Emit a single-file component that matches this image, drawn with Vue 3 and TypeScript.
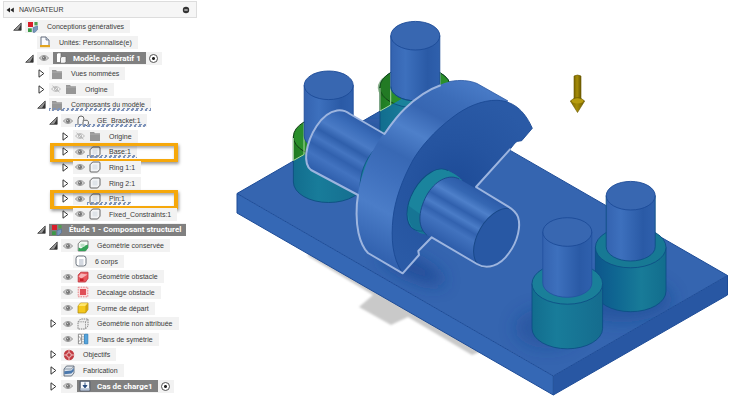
<script setup lang="ts">
import { ref } from 'vue'

interface TreeNode {
  label: string
  depth: number
  icon: string
  arrow?: 'open' | 'closed'
  eye?: 'on' | 'off'
  strong?: boolean
  full?: boolean
  hatch?: boolean
  boxed?: boolean
  radio?: boolean
}

const nodes = ref<TreeNode[]>([
  { label: 'Conceptions génératives', depth: 0, icon: 'study', arrow: 'open' },
  { label: 'Unités: Personnalisé(e)', depth: 1, icon: 'units' },
  { label: 'Modèle génératif 1', depth: 1, icon: 'model', arrow: 'open', eye: 'on', strong: true, radio: true },
  { label: 'Vues nommées', depth: 2, icon: 'folder', arrow: 'closed' },
  { label: 'Origine', depth: 2, icon: 'folder', arrow: 'closed', eye: 'off' },
  { label: 'Composants du modèle', depth: 2, icon: 'folder', arrow: 'open', hatch: true },
  { label: 'GE_Bracket:1', depth: 3, icon: 'bracket', arrow: 'open', eye: 'on', hatch: true },
  { label: 'Origine', depth: 4, icon: 'folder', arrow: 'closed', eye: 'off' },
  { label: 'Base:1', depth: 4, icon: 'body', arrow: 'closed', eye: 'on', hatch: true, boxed: true },
  { label: 'Ring 1:1', depth: 4, icon: 'body', arrow: 'closed', eye: 'on' },
  { label: 'Ring 2:1', depth: 4, icon: 'body', arrow: 'closed', eye: 'on' },
  { label: 'Pin:1', depth: 4, icon: 'body', arrow: 'closed', eye: 'on', hatch: true, boxed: true },
  { label: 'Fixed_Constraints:1', depth: 4, icon: 'body', arrow: 'closed', eye: 'on' },
  { label: 'Étude 1 - Composant structurel', depth: 2, icon: 'study', arrow: 'open', strong: true, full: true },
  { label: 'Géométrie conservée', depth: 3, icon: 'preserve', arrow: 'open', eye: 'on' },
  { label: '6 corps', depth: 4, icon: 'solid' },
  { label: 'Géométrie obstacle', depth: 3, icon: 'obstacle', eye: 'on' },
  { label: 'Décalage obstacle', depth: 3, icon: 'offset', eye: 'on' },
  { label: 'Forme de départ', depth: 3, icon: 'start', eye: 'on' },
  { label: 'Géométrie non attribuée', depth: 3, icon: 'unassigned', arrow: 'closed', eye: 'on' },
  { label: 'Plans de symétrie', depth: 3, icon: 'symmetry', eye: 'on' },
  { label: 'Objectifs', depth: 3, icon: 'goals', arrow: 'closed' },
  { label: 'Fabrication', depth: 3, icon: 'make', arrow: 'closed' },
  { label: 'Cas de charge1', depth: 3, icon: 'load', arrow: 'closed', eye: 'on', strong: true, radio: true },
])

function toggleEye(node: TreeNode) {
  node.eye = node.eye === 'on' ? 'off' : 'on'
}
</script>

<template>
  <div class="page">
    <svg class="defs" aria-hidden="true">
      <symbol id="open" viewBox="0 0 9 9">
        <path d="M.7 8.3 8.2 1V8.3Z" fill="#999" stroke="#333" stroke-width=".8" />
        <path d="M5 8 8 3V8Z" fill="#333" />
      </symbol>
      <symbol id="closed" viewBox="0 0 9 9">
        <path d="M2 .8 6.800 4.500 2 8.200Z" fill="#fff" stroke="#333" stroke-width="1" stroke-linejoin="round" />
      </symbol>
      <symbol id="on" viewBox="0 0 10 8">
        <path d="M.3 4Q5-1.2 9.7 4 5 9.2.3 4Z" fill="#d0d0d0" stroke="#8b8b8b" stroke-width=".8" />
        <circle cx="5" cy="4" r="2.1" fill="#777" />
        <circle cx="4.5" cy="3.5" r=".6" fill="#ddd" />
      </symbol>
      <symbol id="off" viewBox="0 0 10 8">
        <path d="M.5 4Q5-1 9.5 4 5 9 .5 4Z" fill="none" stroke="#b0b0b0" stroke-width=".8" />
        <circle cx="5" cy="4" r="1.6" fill="none" stroke="#b0b0b0" stroke-width=".8" />
        <path d="m1.5.8 7 6.4" stroke="#aaa" stroke-width=".8" />
      </symbol>
      <symbol id="folder" viewBox="0 0 12 12">
        <path d="M1 2h4l1 1.2h5V11H1Z" fill="#969696" />
        <path d="M1 4.1h10" stroke="#b9b9b9" stroke-width=".6" />
      </symbol>
      <symbol id="study" viewBox="0 0 12 12">
        <path d="M1 1h5v5H1Z" fill="#d91e2a" />
        <path d="M7.4 1H10.600v3.400H7.400Z" fill="#4f9f50" />
        <path d="M1 7.300h3.800V11H1Z" fill="#3c9a48" />
        <path d="M6 6.500 10.500 5v3.500L8 11.300H6Z" fill="#7898bd" stroke="#4d6d96" stroke-width=".6" />
      </symbol>
      <symbol id="units" viewBox="0 0 12 12">
        <path d="M2 1h5l3 3v6H2Z" fill="#fafbfd" stroke="#555e70" stroke-width=".9" />
        <path d="M7 1v3h3" fill="#ccd3df" stroke="#555e70" stroke-width=".7" />
        <path d="M1 9h10v2.200H1Z" fill="#e3a51f" />
      </symbol>
      <symbol id="model" viewBox="0 0 12 12">
        <path d="M1.500 2 3 .8h3v8l-1.200 1.700H1.500Z" fill="#fff" stroke="#666" stroke-width=".7" />
        <path d="M5.500 6 7 4.500h4v5l-1.300 1.700H5.500Z" fill="#f4f4f4" stroke="#666" stroke-width=".7" />
      </symbol>
      <symbol id="bracket" viewBox="0 0 12 12">
        <path d="M1 10V4.500Q1 1 4 1t3 3l-1 2M6 10V6.800L7.500 5.300h2.600l1.300 1.200V9L10 10.500H6Z" fill="#f8f8f8" stroke="#555" stroke-width=".9" />
      </symbol>
      <symbol id="body" viewBox="0 0 12 12">
        <path d="M1 3.800 3.600 1H10q1 0 1 1v6.200L8.600 11H2q-1 0-1-1Z" fill="#f3f4f6" stroke="#555" stroke-width=".9" />
        <path d="M3.500 3.500h5v5h-5Z" fill="#dfe4e9" />
      </symbol>
      <symbol id="solid" viewBox="0 0 12 12">
        <rect x="1" y="1" width="10" height="10" rx="2.500" fill="#fff" stroke="#5b6470" stroke-width=".9" />
        <path d="M4 4h4.500v6H4Z" fill="#d4d9e1" />
      </symbol>
      <symbol id="preserve" viewBox="0 0 12 12">
        <path d="M1.200 3.800 3.800 1H11v6.500L8.500 11H1.200Z" fill="#f4fbf5" stroke="#666" stroke-width=".8" />
        <path d="M1.500 7.500 4 8.500 8.300 5.500 11 4.500V8L8.500 11h-7Z" fill="#33a256" />
        <path d="M3.500 3.800h4v3h-4Z" fill="#b9dec3" />
      </symbol>
      <symbol id="obstacle" viewBox="0 0 12 12">
        <path d="M1.200 4 3.800 1.200H11V7.500L8.500 11H1.200Z" fill="#e8555b" stroke="#bd3139" stroke-width=".8" />
        <path d="M1.500 5.500 4 2.500l6.500 1L4.300 7.500Z" fill="#f7b2b5" />
        <path d="M3 7.500h3.500V10H3Z" fill="#c71f29" />
      </symbol>
      <symbol id="offset" viewBox="0 0 12 12">
        <path d="M1.200 1.200h9.600v9.600H1.200Z" fill="#fbdcdd" stroke="#e36a70" stroke-width=".8" stroke-dasharray="1.500 1" />
        <path d="M3 3h6v6H3Z" fill="#df4f57" />
      </symbol>
      <symbol id="start" viewBox="0 0 12 12">
        <path d="M1 4 3.500 1H11v6.500L8.500 11H1Z" fill="#f4c81c" stroke="#a98510" stroke-width=".7" />
        <path d="M1.200 4 3.700 1.300H10.800L8.400 4Z" fill="#ffe76b" />
        <path d="M8.400 4 10.800 1.300V7.300L8.400 10.700Z" fill="#d5a50c" />
      </symbol>
      <symbol id="unassigned" viewBox="0 0 12 12">
        <path d="M1 3.800 3.600 1H11v7L8.500 11H1Z" fill="#eee" stroke="#777" stroke-width=".9" stroke-dasharray="1.500 .8" />
        <path d="M1 3.800h7.500L11 1M8.500 3.800V11" fill="none" stroke="#888" stroke-width=".8" stroke-dasharray="1.500 .8" />
      </symbol>
      <symbol id="symmetry" viewBox="0 0 12 12">
        <path d="M1.400 1.200h3v9.600h-3Z" fill="#fff" stroke="#777" stroke-width=".8" />
        <path d="m1.500 3 2.800 3-2.800 3" fill="none" stroke="#777" stroke-width=".7" />
        <path d="M6 .5v11" stroke="#777" stroke-width=".7" stroke-dasharray="1.500 1" />
        <path d="M7.500 1.200H10.800v9.600H7.500Z" fill="#55a4dc" stroke="#2d7cb8" stroke-width=".8" />
      </symbol>
      <symbol id="goals" viewBox="0 0 12 12">
        <circle cx="6" cy="6" r="5.200" fill="#c23a40" />
        <circle cx="6" cy="6" r="2.300" fill="none" stroke="#f3d4d4" stroke-width=".9" />
        <path d="M6 .5v3M6 8.500v3M.5 6h3M8.500 6h3" stroke="#f3d4d4" stroke-width=".9" />
      </symbol>
      <symbol id="make" viewBox="0 0 12 12">
        <path d="M1 4 3.500 1H11v7L8.500 11H1Z" fill="#dfe5ec" stroke="#4e5b6b" stroke-width=".8" />
        <path d="M1.300 6.200 8.400 5.500 10.800 3v3L8.400 8.600 1.300 9.200Z" fill="#4c79ad" />
        <path d="M1.200 4h7.200L10.800 1.300" fill="none" stroke="#66758a" stroke-width=".7" />
      </symbol>
      <symbol id="load" viewBox="0 0 12 12">
        <path d="M1.200 1.200h9.600v9.600H1.200Z" fill="#f7f9fc" stroke="#39465c" stroke-width=".9" />
        <path d="M1.500 8.200h9v2.300h-9Z" fill="#b6c3d5" />
        <path d="M6 2.500v5M4 5.500l2 2.300 2-2.300Z" fill="#23477c" stroke="#23477c" stroke-width=".9" />
      </symbol>
    </svg>

    <aside class="browser">
      <header class="bar">
        <button class="bare collapse" type="button" aria-label="Réduire">
          <svg viewBox="0 0 8 6"><path d="M4 .5v5L.5 3ZM7.800.5v5L4.300 3Z" fill="#222" /></svg>
        </button>
        <h1 class="title">NAVIGATEUR</h1>
        <button class="bare minus" type="button" aria-label="Masquer">
          <svg viewBox="0 0 8 8"><circle cx="4" cy="4" r="3.200" fill="#333" /><path d="M2.300 4h3.400" stroke="#fff" /></svg>
        </button>
      </header>

      <ul class="tree">
        <li
          v-for="(node, i) in nodes"
          :key="i"
          class="row"
          :class="['d' + node.depth, { boxed: node.boxed }]"
        >
          <button v-if="node.arrow" class="bare arrow" type="button" :aria-label="node.label">
            <svg><use :href="'#' + node.arrow" /></svg>
          </button>
          <span v-else class="arrow"></span>
          <div class="item" :class="{ full: node.full }">
            <button v-if="node.eye" class="bare eye" type="button" aria-label="Visibilité" @click="toggleEye(node)">
              <svg><use :href="'#' + node.eye" /></svg>
            </button>
            <label class="name" :class="{ strong: node.strong, hatch: node.hatch }" :for="node.radio ? 'r' + i : undefined">
              <svg class="icon"><use :href="'#' + node.icon" /></svg>
              <span>{{ node.label }}</span>
            </label>
            <input v-if="node.radio" :id="'r' + i" class="radio" type="radio" :name="'active' + i" checked />
          </div>
        </li>
      </ul>
    </aside>

    <main class="canvas">
      <svg class="scene" viewBox="205 0 542 412" preserveAspectRatio="xMinYMin meet" role="img" aria-label="Modèle génératif 1">
        <defs>
          <linearGradient id="pinV"><stop offset="0" stop-color="#3463b0" /><stop offset=".3" stop-color="#3d70bd" /><stop offset=".75" stop-color="#2a5aa6" /><stop offset="1" stop-color="#2f60ad" /></linearGradient>
          <linearGradient id="ringV"><stop offset="0" stop-color="#126d8e" /><stop offset=".35" stop-color="#187c9a" /><stop offset="1" stop-color="#156c8e" /></linearGradient>
          <linearGradient id="ringB"><stop offset="0" stop-color="#0d568c" /><stop offset=".3" stop-color="#0f6792" /><stop offset=".65" stop-color="#187b98" /><stop offset="1" stop-color="#126d8d" /></linearGradient>
          <linearGradient id="greenV"><stop offset="0" stop-color="#1f7a22" /><stop offset=".3" stop-color="#2d962d" /><stop offset="1" stop-color="#1b6320" /></linearGradient>
          <linearGradient id="axle" gradientUnits="userSpaceOnUse" x1="480" y1="190" x2="447" y2="247">
            <stop offset="0" stop-color="#2c5ba8" /><stop offset=".15" stop-color="#3567b3" /><stop offset=".27" stop-color="#4e80ca" /><stop offset=".4" stop-color="#3060ad" /><stop offset=".52" stop-color="#4a7cc7" /><stop offset=".62" stop-color="#3262af" /><stop offset=".72" stop-color="#4273bf" /><stop offset="1" stop-color="#2c5ba8" />
          </linearGradient>
          <linearGradient id="axleL" gradientUnits="userSpaceOnUse" x1="366" y1="124" x2="333" y2="181">
            <stop offset="0" stop-color="#2f5fac" /><stop offset=".14" stop-color="#3b6dba" /><stop offset=".3" stop-color="#4a7bc6" /><stop offset=".43" stop-color="#2f5fab" /><stop offset=".55" stop-color="#4475c1" /><stop offset=".66" stop-color="#3161ae" /><stop offset=".8" stop-color="#4273c0" /><stop offset="1" stop-color="#2f5fac" />
          </linearGradient>
          <linearGradient id="rim" gradientUnits="userSpaceOnUse" x1="480" y1="82" x2="385" y2="262">
            <stop offset="0" stop-color="#4a7cc8" /><stop offset=".14" stop-color="#3c6db9" /><stop offset=".25" stop-color="#3766b2" /><stop offset=".37" stop-color="#4e80ca" /><stop offset=".5" stop-color="#3868b4" /><stop offset=".62" stop-color="#3f70bd" /><stop offset=".78" stop-color="#4b7dc8" /><stop offset="1" stop-color="#3161ae" />
          </linearGradient>
          <radialGradient id="face" gradientUnits="userSpaceOnUse" cx="455" cy="185" r="90"><stop offset="0" stop-color="#1d4b97" /><stop offset=".5" stop-color="#2554a0" /><stop offset="1" stop-color="#2a5aa6" /></radialGradient>
          <linearGradient id="gold"><stop offset="0" stop-color="#7c6800" /><stop offset=".45" stop-color="#a58c08" /><stop offset="1" stop-color="#6d5b00" /></linearGradient>
          <filter id="soft" x="-50%" y="-50%" width="200%" height="200%"><feGaussianBlur stdDeviation="8" /></filter>
          <filter id="haze"><feGaussianBlur stdDeviation="1" /></filter>
          <clipPath id="top"><path d="M237 193.500 411 93.300 727.500 275.500 553.300 376Z" /></clipPath>
          <clipPath id="above"><path d="M280 0V168.800L411 93.300 460 121.500V0Z" /></clipPath>
        </defs>

        <path filter="url(#haze)" fill="#c9c9c9" d="M308 256 373 295 359 307 391 325 408 317 472 355 480 352 480 340 310 242Z" />

        <!-- base plate -->
        <path d="M237 193.500 411 93.300 727.500 275.500 553.300 376Z" fill="#3565b0" />
        <g clip-path="url(#top)">
          <g filter="url(#soft)" fill="#17458f">
            <ellipse cx="413" cy="268" rx="34" ry="10" transform="rotate(25 413 268)" opacity=".7" />
            <ellipse cx="547" cy="328" rx="32" ry="20" opacity=".4" />
            <ellipse cx="622" cy="300" rx="50" ry="22" opacity=".5" />
            <ellipse cx="372" cy="140" rx="30" ry="22" opacity=".45" />
          </g>
        </g>
        <path d="M237 193.500V213L553.300 395V376Z" fill="#3568b5" />
        <path d="M553.300 376V395L727.500 295V275.500Z" fill="#2857a3" />
        <g fill="none" stroke="#1c4b97" stroke-width="1">
          <path d="M237 193.500 411 93.300 727.500 275.500V295L553.300 395 237 213Z" />
          <path d="M237 193.500 553.300 376 727.500 275.500M553.300 376V395" />
        </g>

        <!-- rear mounting rings -->
        <g stroke="#0d4f80" stroke-width=".9">
          <path d="M380 87.300V131.800A35.300 20.500 0 0 0 450.600 131.800V87.300Z" fill="url(#ringV)" />
          <ellipse cx="415.300" cy="87.300" rx="35.300" ry="20.500" fill="#1a829b" />
          <path d="M293.400 136.700V182A35.300 20.500 0 0 0 364 182V136.700Z" fill="url(#ringV)" />
        </g>
        <g clip-path="url(#above)" stroke="#123d17" stroke-width="1">
          <path d="M380 87.300V131.800H450.600V87.300Z" fill="url(#greenV)" />
          <ellipse cx="415.300" cy="87.300" rx="35.300" ry="20.500" fill="#2a8f2b" />
          <path d="M384 98A33 18 0 0 1 391 73V101Z" fill="#1a651e" opacity=".5" stroke="none" />
          <path d="M293.400 136.700V182H364V136.700Z" fill="url(#greenV)" />
          <ellipse cx="328.700" cy="136.700" rx="35.300" ry="20.500" fill="#2a8f2b" />
        </g>
        <path d="M390.700 73V105L380 111V88M304 123V154.500L293.400 160.500V138M440 72V86" fill="none" stroke="#a9d7a2" stroke-width="1" />

        <!-- rear pins -->
        <g stroke="#1c4b97" stroke-width=".9">
          <path d="M390.800 35.700V86.500A24.500 14.300 0 0 0 439.800 86.500V35.700Z" fill="url(#pinV)" />
          <ellipse cx="415.300" cy="35.700" rx="24.500" ry="14.300" fill="#3867b1" />
          <path d="M304.200 85.300V136A24.500 14.300 0 0 0 353.200 136V85.300Z" fill="url(#pinV)" />
          <ellipse cx="328.700" cy="85.300" rx="24.500" ry="14.300" fill="#3867b1" />
        </g>
        <path d="M390.800 86.500A24.500 14.300 0 0 0 439.800 86.500" fill="none" stroke="#0d4f80" stroke-width=".9" />

        <!-- axle, rear half -->
        <path d="M384 134 350 114C346 111 341 110 337 110.500 321 113 309 135 306.300 153 305.500 161 307 167 311 170L358 195 400 200 400 140Z" fill="url(#axleL)" />
        <path d="M375 149C365 160 360 173 360 188L366 188 372 160Z" fill="#1a829b" stroke="#0d4f80" stroke-width=".8" />

        <!-- wheel -->
        <path d="M402.700 273.300 368 253C360 244 357 228 356.500 213 356 195 361 177 368 160 376 143 390 122 405 108 420 94 436 85 450 81.500 460 79.500 470 80.500 477 83.500L508 101Z" fill="url(#rim)" />
        <path d="M402.700 273.300C392 258 391 238 393 218 395 200 402 180 413 160 420 148 433 132 453 117 466 107 482 100 497 100.300 516 101 526 114 532.300 128.300L521.700 140.700Q516 141 515 143L510 149.300 476 186.700 431.700 237.300 418.300 251 419 255Z" fill="url(#face)" stroke="#1b4994" stroke-width=".9" />
        <path d="M450 81.500C460 79.500 470 80.500 477 83.500L508 101" fill="none" stroke="#2857a3" stroke-width=".8" />

        <!-- collar and axle, front half -->
        <path d="M448 170.500 455 174.500 460 178 443 207 428 235 420 233 414 229.500Z" fill="#1a829b" />
        <ellipse cx="431" cy="200" rx="34" ry="19.600" transform="rotate(-60 431 200)" fill="#1a849d" stroke="#0d4f80" stroke-width=".9" />
        <path d="M448 170.500 455 174.500 462 180 443 214 430 236 422 233Z" fill="#1a849d" />
        <path d="M407.500 205C407.500 220 411 228 417 230.500L430 237 427 230 420 214Z" fill="#12668c" opacity=".5" />
        <path d="M459.200 179 512.700 210 480.300 266 426.800 235C416 226 419 208 428 193 437 179 450 174 459.200 179Z" fill="url(#axle)" />
        <path d="M426.800 235C416 226 419 208 428 193 437 179 450 174 459.200 179" fill="none" stroke="#174787" stroke-width=".9" />
        <ellipse cx="496.500" cy="238" rx="32.400" ry="18.700" transform="rotate(-60 496.500 238)" fill="#2858a4" stroke="#174787" stroke-width=".9" />

        <!-- selection outline -->
        <g fill="none" stroke="#9db5df" stroke-width="2" stroke-linejoin="round" stroke-linecap="round">
          <path d="M440 85.500C427 90 416 98 405 108.500 396 117 390 126 384.500 134L350 114C346 111 341 110 337 110.500 321 113 309 135 306.300 153 305.500 161 307 167 311 170L358 195C356 206 356 222 358.500 233 361 244 364 249 368 253L402.700 273.300 419 255 418.300 251 431.700 237.300 477 264C487 270 500 266 509 253 518 241 521 226 518 217 516 212 512 209 508.300 206.700L476 187 510 149.300" />
        </g>

        <!-- front pins and rings -->
        <g stroke="#0d4f86" stroke-width=".9">
          <path d="M595.400 247.300V291.200A35.300 20.500 0 0 0 666 291.200V247.300Z" fill="url(#ringB)" />
          <ellipse cx="630.700" cy="247.300" rx="35.300" ry="20.500" fill="#177994" />
          <path d="M606.200 195.700V246.700A24.500 14.300 0 0 0 655.200 246.700V195.700Z" fill="url(#pinV)" />
          <ellipse cx="630.700" cy="195.700" rx="24.500" ry="14.300" fill="#3867b1" stroke="#1c4b97" />
          <path d="M532 283.700V328.300A35.300 20.500 0 0 0 602.600 328.300V283.700Z" fill="url(#ringV)" />
          <ellipse cx="567.300" cy="283.700" rx="35.300" ry="20.500" fill="#1a7f99" />
          <path d="M542.800 232V283A24.500 14.300 0 0 0 591.800 283V232Z" fill="url(#pinV)" stroke="#2453a0" />
          <ellipse cx="567.300" cy="232" rx="24.500" ry="14.300" fill="#3867b1" stroke="#1c4b97" />
        </g>

        <!-- load direction -->
        <path d="M574 76Q577.500 74 581 76V99H574Z" fill="url(#gold)" stroke="#6a5900" stroke-width=".6" />
        <path d="M570.300 101Q577.500 94 584.700 101L577.500 112.500Z" fill="url(#gold)" stroke="#6a5900" stroke-width=".6" />
        <ellipse cx="577.500" cy="101" rx="6" ry="2.500" fill="#b79c10" />
      </svg>
    </main>
  </div>
</template>

<style>
body {
  background: #fff;
}
</style>

<style scoped>
.page {
  display: flex;
  min-height: 100vh;
  font-family: "Liberation Sans", Arial, sans-serif;
  font-size: 7px;
  line-height: 13px;
  color: #3a3a3a;
}
.defs {
  position: absolute;
  width: 0;
  height: 0;
}
.browser {
  display: flex;
  flex: 0 0 205px;
  flex-direction: column;
}
.bar {
  display: flex;
  align-items: center;
  gap: 5px;
  box-sizing: border-box;
  height: 17px;
  margin: 1px 8px 0 3px;
  padding: 0 6px 0 2px;
  border: 1px solid #ddd;
  background: #f6f6f6;
}
.title {
  flex: 1;
  margin: 0;
  font-size: 7px;
  font-weight: 400;
}
.bare {
  display: flex;
  padding: 0;
  border: 0;
  background: none;
}
.collapse svg {
  width: 8px;
  height: 6px;
}
.minus svg {
  width: 8px;
  height: 8px;
}
.tree {
  display: grid;
  flex: 1;
  grid-auto-rows: 1fr;
  margin: 0;
  padding: 1px 0 18px;
  list-style: none;
}
.row {
  position: relative;
  display: flex;
  align-items: center;
}
.d0 { padding-left: 13px; }
.d1 { padding-left: 25px; }
.d2 { padding-left: 37px; }
.d3 { padding-left: 49px; }
.d4 { padding-left: 61px; }
.arrow {
  width: 12px;
}
.arrow svg {
  width: 9px;
  height: 9px;
}
.item {
  display: flex;
  align-items: center;
  height: 13px;
  padding: 0 4px 0 2px;
  background: #f2f2f2;
}
.item.full {
  padding: 0;
}
.eye {
  width: 14px;
}
.eye svg {
  width: 10px;
  height: 8px;
}
.name {
  display: flex;
  align-items: center;
  gap: 8px;
  height: 13px;
  padding-right: 2px;
  white-space: nowrap;
}
.icon {
  width: 12px;
  height: 12px;
}
.strong {
  gap: 6px;
  height: 12px;
  padding: 0 5px 0 2px;
  background: #808080;
  color: #fff;
  font-family: Roboto, "Liberation Sans", sans-serif;
  font-size: 8px;
  font-weight: 700;
}
.hatch {
  position: relative;
}
.hatch::after {
  content: "";
  position: absolute;
  right: -4px;
  bottom: 0;
  left: -2px;
  height: 3px;
  background: repeating-linear-gradient(120deg, #7d93bb 0 2px, transparent 2px 4px);
}
.radio {
  width: 9px;
  height: 9px;
  margin: 0 0 0 3px;
  border: 1px solid #555;
  border-radius: 50%;
  background: radial-gradient(circle, #222 0 1px, #fff 2px);
  appearance: none;
}
.boxed::after {
  content: "";
  position: absolute;
  top: -1px;
  bottom: -2px;
  left: 50px;
  box-sizing: border-box;
  width: 128px;
  border: 4px solid #f6a80b;
  border-width: 3px 4px;
  box-shadow: 1px 2px 3px #0006, inset 1px 2px 3px #0005;
  pointer-events: none;
}
.canvas {
  flex: 1;
  min-width: 0;
}
.scene {
  display: block;
  width: 100%;
}
</style>
